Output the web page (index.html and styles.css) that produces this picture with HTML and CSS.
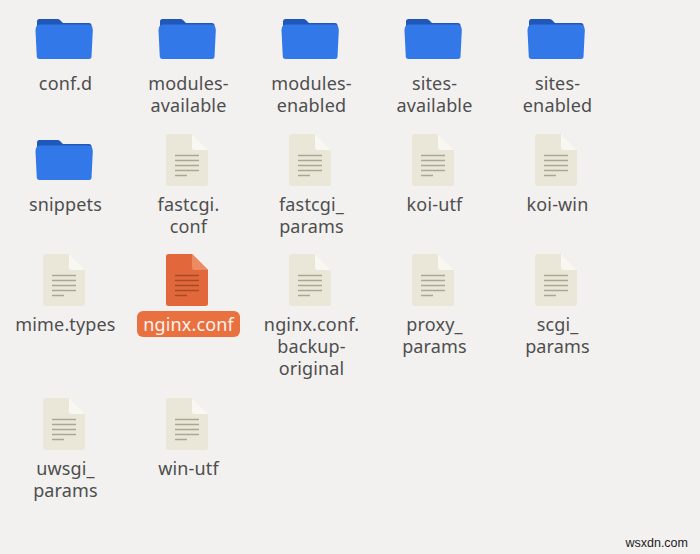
FILE: index.html
```html
<!doctype html>
<html>
<head>
<meta charset="utf-8">
<link rel="stylesheet" href="styles.css">
</head>
<body>
<svg class="defs" width="0" height="0">
	<symbol id="folder" viewBox="0 0 60 52">
		<path d="M3 12V8.500Q3 6 5.500 6H23.500Q25 6 26 7L29 10H55Q57.500 10 57.500 12.500V16H3Z" fill="#1f58b8"/>
		<path d="M1.500 17.500Q1.500 11.500 6 11.500H54.500Q58.800 11.500 58.800 17.500L57.500 44Q57.300 46 55 46H5.500Q3 46 2.800 44Z" fill="#3378e8"/>
	</symbol>
	<symbol id="doc" viewBox="0 1 44 52">
		<path d="M3.500 1H27L43 17V50.500Q43 53 40.500 53H3.500Q1 53 1 50.500V3.500Q1 1 3.500 1Z" fill="#ebe7d8"/>
		<path d="M27 1L43 17H29.500Q27 17 27 14.500Z" fill="#f8f7f1"/>
		<path d="M10 22.500H34M10 27.500H34M10 32.500H34M10 37.500H34M10 42.500H22" stroke="#aaa795" stroke-width="1.600"/>
	</symbol>
	<symbol id="doc-selected" viewBox="0 1 44 52">
		<path d="M3.500 1H27L43 17V50.500Q43 53 40.500 53H3.500Q1 53 1 50.500V3.500Q1 1 3.500 1Z" fill="#e2673a"/>
		<path d="M27 1L43 17H29.500Q27 17 27 14.500Z" fill="#ec8a62"/>
		<path d="M10 22.500H34M10 27.500H34M10 32.500H34M10 37.500H34M10 42.500H22" stroke="#a84a26" stroke-width="1.600"/>
	</symbol>
</svg>

<div class="files">
	<div class="item"><svg class="icon"><use href="#folder"/></svg><span class="name">conf.d</span></div>
	<div class="item"><svg class="icon"><use href="#folder"/></svg><span class="name">modules-<br>available</span></div>
	<div class="item"><svg class="icon"><use href="#folder"/></svg><span class="name">modules-<br>enabled</span></div>
	<div class="item"><svg class="icon"><use href="#folder"/></svg><span class="name">sites-<br>available</span></div>
	<div class="item"><svg class="icon"><use href="#folder"/></svg><span class="name">sites-<br>enabled</span></div>

	<div class="item"><svg class="icon"><use href="#folder"/></svg><span class="name">snippets</span></div>
	<div class="item"><svg class="icon"><use href="#doc"/></svg><span class="name">fastcgi.<br>conf</span></div>
	<div class="item"><svg class="icon"><use href="#doc"/></svg><span class="name">fastcgi_<br>params</span></div>
	<div class="item"><svg class="icon"><use href="#doc"/></svg><span class="name">koi-utf</span></div>
	<div class="item"><svg class="icon"><use href="#doc"/></svg><span class="name">koi-win</span></div>

	<div class="item"><svg class="icon"><use href="#doc"/></svg><span class="name">mime.types</span></div>
	<div class="item"><svg class="icon"><use href="#doc-selected"/></svg><span class="name selected">nginx.conf</span></div>
	<div class="item"><svg class="icon"><use href="#doc"/></svg><span class="name">nginx.conf.<br>backup-<br>original</span></div>
	<div class="item"><svg class="icon"><use href="#doc"/></svg><span class="name">proxy_<br>params</span></div>
	<div class="item"><svg class="icon"><use href="#doc"/></svg><span class="name">scgi_<br>params</span></div>

	<div class="item"><svg class="icon"><use href="#doc"/></svg><span class="name">uwsgi_<br>params</span></div>
	<div class="item"><svg class="icon"><use href="#doc"/></svg><span class="name">win-utf</span></div>
</div>

<div class="mark">wsxdn.com</div>
</body>
</html>
```

FILE: styles.css
```css
html, body {
	height: 100%;
}
body {
	margin: 0;
	background-color: #f2f1f0;
	overflow: hidden;
	position: relative;
}
.defs {
	display: block;
	height: 0;
}
.files {
	display: grid;
	grid-template-columns: repeat(5, 123px);
	grid-template-rows: 121px 120px 144px 100px;
	padding: 13px 0 0 4px;
	font-family: "Noto Sans", sans-serif;
	font-size: 18px;
	letter-spacing: 0.15px;
	line-height: 22px;
	color: #4e4e4e;
}
.item {
	display: flex;
	flex-direction: column;
	align-items: center;
}
.icon {
	display: block;
	flex: none;
	width: 60px;
	height: 52px;
	margin: 0 4px 7px 0;
}
.name {
	display: block;
	text-align: center;
}
.selected {
	background-color: #e9703f;
	color: #fdf3ee;
	border-radius: 6px;
	padding: 0 6px;
	margin-top: -2px;
	height: 26px;
	line-height: 26px;
}
.mark {
	position: absolute;
	right: 12px;
	bottom: 4px;
	font-family: "Liberation Sans", sans-serif;
	font-size: 12.5px;
	letter-spacing: 0;
	color: #222;
}
```
